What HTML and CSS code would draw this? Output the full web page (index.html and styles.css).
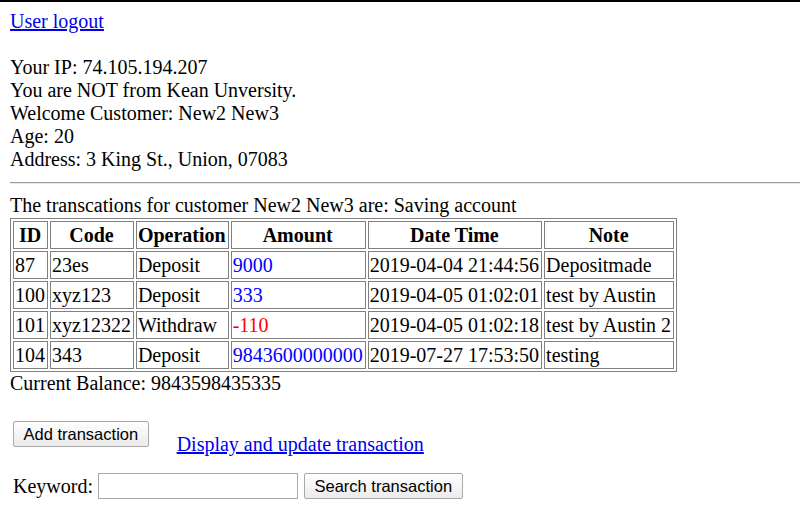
FILE: index.html
```html
<!DOCTYPE html>
<html>
<head>
<meta charset="utf-8">
<link rel="stylesheet" href="styles.css">
</head>
<body>
<a href="#" class="link">User logout</a><br><br>
Your IP: 74.105.194.207<br>
You are NOT from Kean Unversity.<br>
Welcome Customer: New2 New3<br>
Age: 20<br>
Address: 3 King St., Union, 07083<br>
<div class="rule"></div>
The transcations for customer New2 New3 are: Saving account
<table class="tx">
<tr><th>ID</th><th>Code</th><th>Operation</th><th>Amount</th><th>Date Time</th><th>Note</th></tr>
<tr><td>87</td><td>23es</td><td>Deposit</td><td class="pos">9000</td><td>2019-04-04 21:44:56</td><td>Depositmade</td></tr>
<tr><td>100</td><td>xyz123</td><td>Deposit</td><td class="pos">333</td><td>2019-04-05 01:02:01</td><td>test by Austin</td></tr>
<tr><td>101</td><td>xyz12322</td><td>Withdraw</td><td class="neg">-110</td><td>2019-04-05 01:02:18</td><td>test by Austin 2</td></tr>
<tr><td>104</td><td>343</td><td>Deposit</td><td class="pos">9843600000000</td><td>2019-07-27 17:53:50</td><td>testing</td></tr>
</table>
<div class="balance">Current Balance: 9843598435335</div>
<div class="actions">
  <button class="btn btn-add" type="button">Add transaction</button>
  <a href="#" class="link display-link">Display and update transaction</a>
</div>
<div class="search">
  <span class="label">Keyword:</span>
  <input class="field" type="text">
  <button class="btn btn-search" type="button">Search transaction</button>
</div>
</body>
</html>
```
FILE: styles.css
```css
html {
  border-top: 2px solid #000;
  background: #fff;
}
body {
  margin: 8px 0 10px 10px;
  font-family: "Liberation Serif", "Times New Roman", serif;
  font-size: 20px;
  line-height: 23px;
  color: #000;
}
.link {
  color: #0000ee;
  text-decoration: underline;
}
.rule {
  margin: 11px 0 10px 0;
  height: 0;
  border-top: 1px solid #9a9a9a;
  border-bottom: 1px solid #ececec;
}
.tx {
  border: 1px solid #808080;
  border-spacing: 2px;
  margin-top: 1px;
}
.tx th,
.tx td {
  border: 1px solid #808080;
  padding: 1px 2px 1px 1px;
  line-height: 24px;
  font-size: 20px;
  white-space: nowrap;
}
.tx th {
  font-weight: bold;
  text-align: center;
}
.tx td {
  text-align: left;
}
.pos { color: #0000ff; }
.neg { color: #ff0000; }
.balance {
  line-height: 23px;
}
.actions {
  display: flex;
  align-items: flex-start;
  margin-top: 26px;
  padding-left: 3px;
}
.btn {
  font-family: "Liberation Sans", Arial, sans-serif;
  font-size: 16.5px;
  color: #000;
  background: linear-gradient(#ffffff, #ebebeb);
  border: 1px solid #a9a9a9;
  border-radius: 2px;
  height: 26px;
  padding: 0 9.5px;
  margin: 0;
  line-height: 22px;
}
.display-link {
  margin-left: 28px;
  padding-top: 12px;
}
.search {
  display: flex;
  align-items: center;
  margin-top: 17px;
  padding-left: 3px;
}
.field {
  width: 200px;
  height: 26px;
  box-sizing: border-box;
  border: 1px solid #a9a9a9;
  margin: 0 0 0 5px;
  padding: 0 2px;
  font-size: 16px;
}
.btn-search {
  margin-left: 6px;
}
```
